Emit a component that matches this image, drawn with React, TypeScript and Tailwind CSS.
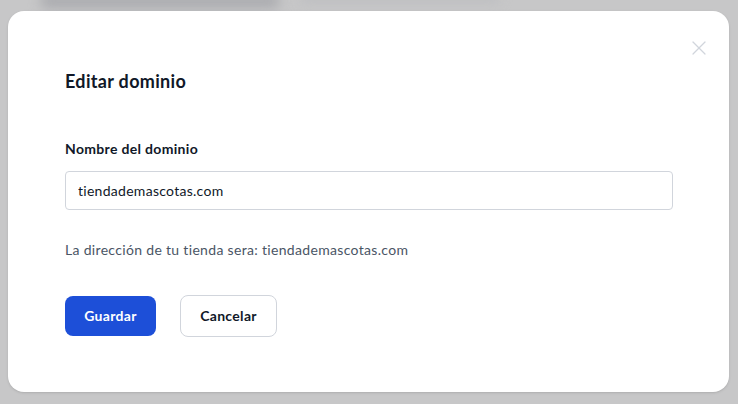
import React from 'react';
import { X } from 'lucide-react';

const domain = 'tiendademascotas.com';

const App = () => {
  return <div className="relative w-[738px] h-[404px] overflow-hidden bg-[#c7c7c8] font-['Lato','Noto_Sans',sans-serif] tracking-[0.02em]">
      {/* blurred page behind the dialog */}
      <div className="absolute left-[40px] top-[-6px] w-[240px] h-[14px] rounded-full bg-[#a9aaae] blur-[6px]" />
      <div className="absolute left-[300px] top-[-8px] w-[200px] h-[10px] rounded-full bg-[#bcbdc0] blur-[6px]" />
      <div className="relative pt-[11px] px-[8px]">
        <div className="relative w-[721px] h-[381px] bg-white rounded-2xl shadow-sm py-14 pl-[57px] pr-14">
          <button className="absolute right-[18px] top-[25px] text-gray-300">
            <X size={24} strokeWidth={1.2} />
          </button>
          <h2 className="text-lg leading-7 font-bold text-gray-900">Editar dominio</h2>
          <div className="mt-11">
            <label className="block text-sm leading-5 font-bold text-gray-900">Nombre del dominio</label>
            <input readOnly value={domain} className="mt-3 w-full h-[39px] px-3 rounded border border-gray-300 text-sm text-gray-900 tracking-[0.02em] outline-none" />
          </div>
          <p className="mt-[30px] text-sm leading-5 text-gray-600">La dirección de tu tienda sera: {domain}</p>
          <div className="mt-[35px] flex items-center gap-6">
            <button className="h-10 w-[91px] rounded-lg bg-[#1d4fd8] text-white text-sm font-bold">Guardar</button>
            <button className="h-[42px] w-[97px] rounded-lg border border-gray-300 bg-white text-gray-900 text-sm font-bold">Cancelar</button>
          </div>
        </div>
      </div>
    </div>;
};

export default App;
